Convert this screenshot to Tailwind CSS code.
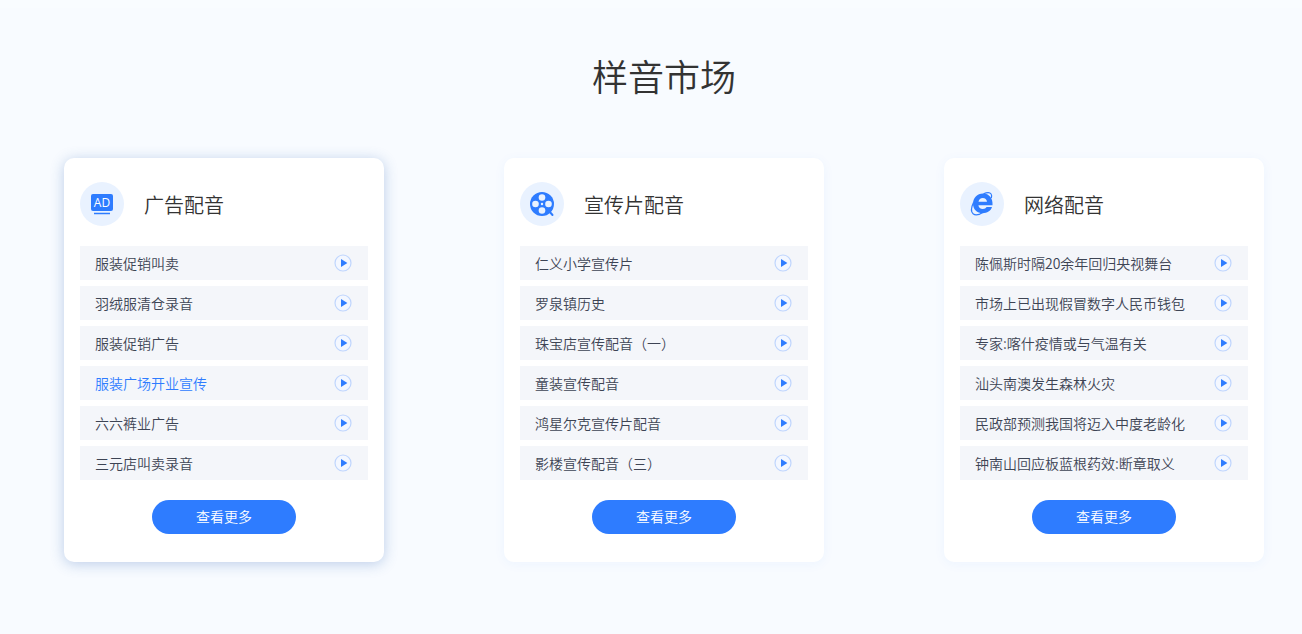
<!DOCTYPE html>
<html lang="zh-CN">
<head>
<meta charset="utf-8">
<meta name="viewport" content="width=device-width, initial-scale=1">
<title>样音市场</title>
<script src="https://cdn.jsdelivr.net/npm/@tailwindcss/browser@4"></script>
</head>
<body class="min-h-screen bg-[#f8fbff] font-['Noto_Sans_CJK_SC',sans-serif] text-[#333333]">
<svg class="hidden" aria-hidden="true">
  <symbol id="play" viewBox="0 0 18 18">
    <circle cx="9" cy="9" r="8" fill="#f3f7ff" stroke="#bfd5fd" stroke-width="1.2"/>
    <path d="M7 5v8L13.400 9z" fill="#2e7cff"/>
  </symbol>
</svg>
<main class="border-t-8 border-[#f9fcff] pb-18 pl-[26px]">
  <h1 class="pt-10 text-center text-4xl leading-[54px] font-[350]">样音市场</h1>
  <div class="mx-auto mt-14 flex max-w-[1200px] flex-wrap justify-between gap-y-8">

    <section class="w-80 rounded-[10px] bg-white px-4 pt-6 pb-7 shadow-[0_2px_14px_rgba(46,100,180,0.3)]">
      <header class="flex items-center gap-5">
        <svg class="size-11" viewBox="0 0 44 44" aria-hidden="true">
          <circle cx="22" cy="22" r="22" fill="#e9f2ff"/>
          <rect x="11" y="12" width="22" height="17" rx="2" fill="#2e7cff"/>
          <path d="M14 31.500h16" stroke="#2e7cff" stroke-width="1.5"/>
          <text x="22" y="24.500" text-anchor="middle" fill="#ffffff" class="font-['Open_Sans',sans-serif] text-xs">AD</text>
        </svg>
        <h2 class="pt-0.5 text-xl font-[350]">广告配音</h2>
      </header>
      <ul class="mt-5 flex flex-col gap-1.5 text-sm font-[350] text-[#3d4454]">
        <li class="flex h-[34px] items-center justify-between bg-[#f4f6fa] pr-4 pl-[15px]"><a href="#">服装促销叫卖</a><button type="button" aria-label="播放"><svg class="size-[18px]"><use href="#play"/></svg></button></li>
        <li class="flex h-[34px] items-center justify-between bg-[#f4f6fa] pr-4 pl-[15px]"><a href="#">羽绒服清仓录音</a><button type="button" aria-label="播放"><svg class="size-[18px]"><use href="#play"/></svg></button></li>
        <li class="flex h-[34px] items-center justify-between bg-[#f4f6fa] pr-4 pl-[15px]"><a href="#">服装促销广告</a><button type="button" aria-label="播放"><svg class="size-[18px]"><use href="#play"/></svg></button></li>
        <li class="flex h-[34px] items-center justify-between bg-[#f4f6fa] pr-4 pl-[15px]"><a href="#" class="text-[#2e7cff]">服装广场开业宣传</a><button type="button" aria-label="播放"><svg class="size-[18px]"><use href="#play"/></svg></button></li>
        <li class="flex h-[34px] items-center justify-between bg-[#f4f6fa] pr-4 pl-[15px]"><a href="#">六六裤业广告</a><button type="button" aria-label="播放"><svg class="size-[18px]"><use href="#play"/></svg></button></li>
        <li class="flex h-[34px] items-center justify-between bg-[#f4f6fa] pr-4 pl-[15px]"><a href="#">三元店叫卖录音</a><button type="button" aria-label="播放"><svg class="size-[18px]"><use href="#play"/></svg></button></li>
      </ul>
      <button type="button" class="mx-auto mt-5 block h-[34px] w-36 rounded-full bg-[#2e7cff] pb-0.5 text-sm font-[350] text-white">查看更多</button>
    </section>

    <section class="w-80 rounded-[10px] bg-white px-4 pt-6 pb-7 shadow-[0_2px_12px_rgba(46,124,255,0.05)]">
      <header class="flex items-center gap-5">
        <svg class="size-11" viewBox="0 0 44 44" aria-hidden="true">
          <circle cx="22" cy="22" r="22" fill="#e9f2ff"/>
          <circle cx="22" cy="22" r="12" fill="#2e7cff"/>
          <path d="M28.500 28.500l4 4.500" stroke="#2e7cff" stroke-width="2" stroke-linecap="round"/>
          <g fill="#e9f2ff">
            <circle cx="22" cy="15.500" r="3.300"/><circle cx="22" cy="28.500" r="3.300"/>
            <circle cx="15.500" cy="22" r="3.300"/><circle cx="28.500" cy="22" r="3.300"/>
            <circle cx="22" cy="22" r="1.200"/>
          </g>
        </svg>
        <h2 class="pt-0.5 text-xl font-[350]">宣传片配音</h2>
      </header>
      <ul class="mt-5 flex flex-col gap-1.5 text-sm font-[350] text-[#3d4454]">
        <li class="flex h-[34px] items-center justify-between bg-[#f4f6fa] pr-4 pl-[15px]"><a href="#">仁义小学宣传片</a><button type="button" aria-label="播放"><svg class="size-[18px]"><use href="#play"/></svg></button></li>
        <li class="flex h-[34px] items-center justify-between bg-[#f4f6fa] pr-4 pl-[15px]"><a href="#">罗泉镇历史</a><button type="button" aria-label="播放"><svg class="size-[18px]"><use href="#play"/></svg></button></li>
        <li class="flex h-[34px] items-center justify-between bg-[#f4f6fa] pr-4 pl-[15px]"><a href="#">珠宝店宣传配音（一）</a><button type="button" aria-label="播放"><svg class="size-[18px]"><use href="#play"/></svg></button></li>
        <li class="flex h-[34px] items-center justify-between bg-[#f4f6fa] pr-4 pl-[15px]"><a href="#">童装宣传配音</a><button type="button" aria-label="播放"><svg class="size-[18px]"><use href="#play"/></svg></button></li>
        <li class="flex h-[34px] items-center justify-between bg-[#f4f6fa] pr-4 pl-[15px]"><a href="#">鸿星尔克宣传片配音</a><button type="button" aria-label="播放"><svg class="size-[18px]"><use href="#play"/></svg></button></li>
        <li class="flex h-[34px] items-center justify-between bg-[#f4f6fa] pr-4 pl-[15px]"><a href="#">影楼宣传配音（三）</a><button type="button" aria-label="播放"><svg class="size-[18px]"><use href="#play"/></svg></button></li>
      </ul>
      <button type="button" class="mx-auto mt-5 block h-[34px] w-36 rounded-full bg-[#2e7cff] pb-0.5 text-sm font-[350] text-white">查看更多</button>
    </section>

    <section class="w-80 rounded-[10px] bg-white px-4 pt-6 pb-7 shadow-[0_2px_12px_rgba(46,124,255,0.05)]">
      <header class="flex items-center gap-5">
        <svg class="size-11" viewBox="0 0 44 44" aria-hidden="true">
          <circle cx="22" cy="22" r="22" fill="#e9f2ff"/>
          <path fill="#2e7cff" fill-rule="evenodd" d="M23 11.500c-5.800 0-10 4.300-10 10.300 0 5.600 4 9.400 9.700 9.400 4.400 0 8-2.200 9.300-6.200h-5.400c-.7 1.300-2 2-3.800 2-2.400 0-4.200-1.500-4.400-3.800h14.100c.6-6.800-3.300-11.700-9.500-11.700zM18.500 19.700c.4-2.300 2-3.800 4.300-3.800s4 1.500 4.200 3.800z"/>
          <path d="M23.500 11.800c3.500-1.400 6.500-1.300 7.600.2.700 1 .7 2.400.2 4M13.500 20.500c-2.300 4.800-2.500 9.400-.4 11.300 2.200 1.900 6.200 1 10-1.600" stroke="#2e7cff" stroke-width="1.200" fill="none"/>
        </svg>
        <h2 class="pt-0.5 text-xl font-[350]">网络配音</h2>
      </header>
      <ul class="mt-5 flex flex-col gap-1.5 text-sm font-[350] text-[#3d4454]">
        <li class="flex h-[34px] items-center justify-between bg-[#f4f6fa] pr-4 pl-[15px]"><a href="#">陈佩斯时隔20余年回归央视舞台</a><button type="button" aria-label="播放"><svg class="size-[18px]"><use href="#play"/></svg></button></li>
        <li class="flex h-[34px] items-center justify-between bg-[#f4f6fa] pr-4 pl-[15px]"><a href="#">市场上已出现假冒数字人民币钱包</a><button type="button" aria-label="播放"><svg class="size-[18px]"><use href="#play"/></svg></button></li>
        <li class="flex h-[34px] items-center justify-between bg-[#f4f6fa] pr-4 pl-[15px]"><a href="#">专家:喀什疫情或与气温有关</a><button type="button" aria-label="播放"><svg class="size-[18px]"><use href="#play"/></svg></button></li>
        <li class="flex h-[34px] items-center justify-between bg-[#f4f6fa] pr-4 pl-[15px]"><a href="#">汕头南澳发生森林火灾</a><button type="button" aria-label="播放"><svg class="size-[18px]"><use href="#play"/></svg></button></li>
        <li class="flex h-[34px] items-center justify-between bg-[#f4f6fa] pr-4 pl-[15px]"><a href="#">民政部预测我国将迈入中度老龄化</a><button type="button" aria-label="播放"><svg class="size-[18px]"><use href="#play"/></svg></button></li>
        <li class="flex h-[34px] items-center justify-between bg-[#f4f6fa] pr-4 pl-[15px]"><a href="#">钟南山回应板蓝根药效:断章取义</a><button type="button" aria-label="播放"><svg class="size-[18px]"><use href="#play"/></svg></button></li>
      </ul>
      <button type="button" class="mx-auto mt-5 block h-[34px] w-36 rounded-full bg-[#2e7cff] pb-0.5 text-sm font-[350] text-white">查看更多</button>
    </section>

  </div>
</main>
</body>
</html>
